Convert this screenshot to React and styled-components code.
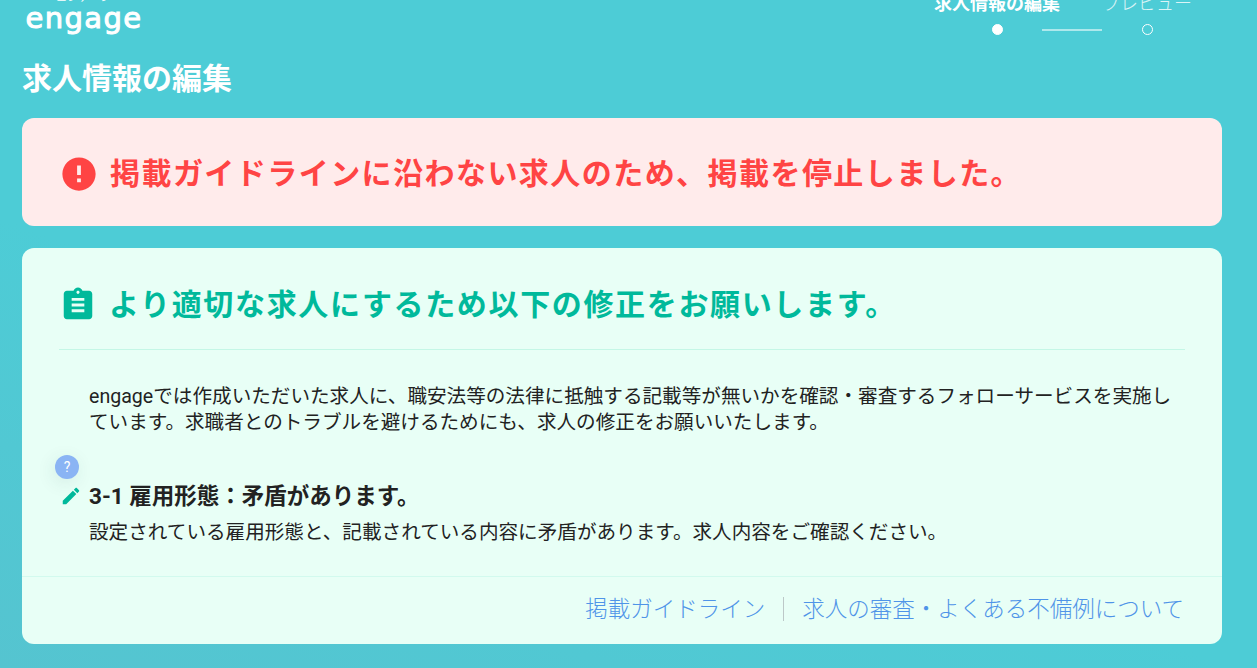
import styled, { createGlobalStyle } from 'styled-components'

const GlobalStyle = createGlobalStyle`
    html, body {
        margin: 0;
        height: 100%;
        overflow: hidden;
    }
    body {
        font-family: Roboto, "Noto Sans CJK JP", sans-serif;
        color: #222;
    }
`

const Page = styled.div`
    height: 668px;
    overflow: hidden;
    padding: 0 35px 0 22px;
    background: linear-gradient(20deg, #55c4d0 0%, #4dccd6 40%, #4dccd6 100%);
`
const Header = styled.header`
    height: 60px;
    display: flex;
    justify-content: space-between;
    align-items: flex-start;
    padding: 0 0 0 4px;
`
const Logo = styled.div`
    margin-top: -7px;
    display: flex;
    flex-direction: column;
    align-items: center;
    color: #fff;
    width: 116px;
`
const LogoKana = styled.span`
    font-size: 10px;
    line-height: 10px;
    letter-spacing: 1px;
`
const LogoName = styled.span`
    font-family: "DejaVu Sans", sans-serif;
    font-size: 29px;
    line-height: 30px;
    letter-spacing: 1.4px;
    -webkit-text-stroke: 1px #fff;
`
const Steps = styled.div`
    display: grid;
    grid-template-columns: 60px 60px 60px;
    column-gap: 15px;
    margin: -8px 45px 0 0;
    justify-items: center;
    align-items: center;
    row-gap: 8px;
`
const StepLabel = styled.span`
    white-space: nowrap;
    font-size: 18px;
    line-height: 24px;
    color: #fff;
    font-weight: ${props => (props.$active ? 700 : 300)};
    opacity: ${props => (props.$active ? 1 : 0.8)};
    grid-column: ${props => props.$column};
`
const StepDot = styled.span`
    width: 11px;
    height: 11px;
    box-sizing: border-box;
    border-radius: 50%;
    border: 1.5px solid #fff;
    background: ${props => (props.$active ? '#fff' : 'transparent')};
`
const StepLine = styled.span`
    width: 60px;
    height: 2px;
    background: rgba(255, 255, 255, 0.55);
`
const PageTitle = styled.h1`
    margin: 0 0 20px;
    height: 38px;
    font-size: 30px;
    line-height: 38px;
    font-weight: 700;
    color: #fff;
`
const Banner = styled.section`
    height: 108px;
    box-sizing: border-box;
    padding: 3px 38px 0;
    display: flex;
    align-items: center;
    gap: 12px;
    border-radius: 12px;
    background: #ffebeb;
    margin-bottom: 22px;
`
const Heading = styled.h2`
    margin: 0;
    font-size: 30px;
    line-height: 40px;
    font-weight: 700;
    letter-spacing: ${props => props.$spacing}px;
    color: ${props => props.$color};
    white-space: nowrap;
`
const Card = styled.section`
    position: relative;
    height: 396px;
    box-sizing: border-box;
    border-radius: 12px;
    background: #e8fff6;
    display: flex;
    flex-direction: column;
`
const CardHead = styled.div`
    margin: 0 37px;
    height: 102px;
    box-sizing: border-box;
    padding: 13px 0 0 0;
    display: flex;
    align-items: center;
    gap: 12px;
    border-bottom: 1px solid #c4f7e6;
`
const Body = styled.div`
    flex: 1;
    padding: 34px 46px 0 67px;
`
const Lead = styled.p`
    margin: 0 0 46px;
    font-size: 19.6px;
    line-height: 26px;
    color: #222;
`
const ItemTitle = styled.h3`
    position: relative;
    margin: 0 0 10px;
    font-size: 22.5px;
    line-height: 28px;
    font-weight: 700;
    color: #222;
`
const EditIcon = styled.svg`
    position: absolute;
    left: -29px;
    top: 3px;
    width: 22px;
    height: 22px;
    fill: #00b99b;
`
const ItemText = styled.p`
    margin: 0;
    font-size: 19.6px;
    line-height: 26px;
    color: #222;
`
const Help = styled.span`
    position: absolute;
    left: 33px;
    top: 207px;
    width: 24px;
    height: 24px;
    border-radius: 50%;
    background: #8ab4f4;
    color: #fff;
    font-size: 14px;
    line-height: 24px;
    text-align: center;
    box-shadow: -2px 4px 18px rgba(40, 70, 80, 0.1);
`
const Footer = styled.footer`
    height: 68px;
    box-sizing: border-box;
    padding: 0 38px 4px 0;
    border-top: 1px solid #d2faee;
    display: flex;
    justify-content: flex-end;
    align-items: center;
`
const FooterLink = styled.a`
    font-size: 22.5px;
    line-height: 30px;
    font-weight: 300;
    color: #4f94e8;
    & + & {
        margin-left: 18px;
        padding-left: 18px;
        border-left: 1px solid #bcc8c8;
        line-height: 24px;
    }
`
const HeadIcon = styled.svg`
    flex: none;
    width: 38px;
    height: 38px;
    fill: ${props => props.$color};
`

function App() {
    return (
        <Page>
            <GlobalStyle />
            <Header>
                <Logo>
                    <LogoKana>エンゲージ</LogoKana>
                    <LogoName>engage</LogoName>
                </Logo>
                <Steps>
                    <StepLabel $active $column={1}>求人情報の編集</StepLabel>
                    <StepLabel $column={3}>プレビュー</StepLabel>
                    <StepDot $active />
                    <StepLine />
                    <StepDot />
                </Steps>
            </Header>
            <PageTitle>求人情報の編集</PageTitle>
            <Banner>
                <HeadIcon viewBox="0 0 24 24" $color="#ff4444" aria-hidden="true">
                    <path d="M12 1.5C6.2 1.5 1.5 6.2 1.5 12S6.2 22.5 12 22.5 22.5 17.8 22.5 12 17.8 1.5 12 1.5zm1.2 15.7h-2.4v-2.4h2.4v2.4zm0-4.6h-2.4V6.6h2.4v6z" />
                </HeadIcon>
                <Heading $color="#ff4444" $spacing={1.45}>掲載ガイドラインに沿わない求人のため、掲載を停止しました。</Heading>
            </Banner>
            <Card>
                <CardHead>
                    <HeadIcon viewBox="0 0 24 24" $color="#00b99b" aria-hidden="true">
                        <path
                            fillRule="evenodd"
                            d="M19 3h-4.18C14.4 1.84 13.3 1 12 1c-1.3 0-2.4.84-2.82 2H5c-1.1 0-2 .9-2 2v14c0 1.1.9 2 2 2h14c1.1 0 2-.9 2-2V5c0-1.1-.9-2-2-2zm-7 0c.55 0 1 .45 1 1s-.45 1-1 1-1-.45-1-1 .45-1 1-1zM8 7.5v1.800h8V7.500zM8 11.100v1.800h8v-1.800zM8 14.700v1.800h8v-1.800z"
                        />
                    </HeadIcon>
                    <Heading $color="#00b99b" $spacing={1.65}>より適切な求人にするため以下の修正をお願いします。</Heading>
                </CardHead>
                <Body>
                    <Lead>
                        engageでは作成いただいた求人に、職安法等の法律に抵触する記載等が無いかを確認・審査するフォローサービスを実施しています。求職者とのトラブルを避けるためにも、求人の修正をお願いいたします。
                    </Lead>
                    <ItemTitle>
                        <EditIcon viewBox="0 0 24 24" aria-hidden="true">
                            <path d="M3 17.25V21h3.75L17.81 9.940l-3.750-3.750L3 17.250zM20.710 7.040c.39-.39.39-1.020 0-1.410l-2.340-2.340c-.39-.39-1.020-.39-1.410 0l-1.830 1.830 3.750 3.750 1.830-1.830z" />
                        </EditIcon>
                        3-1 雇用形態：矛盾があります。
                    </ItemTitle>
                    <ItemText>設定されている雇用形態と、記載されている内容に矛盾があります。求人内容をご確認ください。</ItemText>
                </Body>
                <Help>?</Help>
                <Footer>
                    <FooterLink>掲載ガイドライン</FooterLink>
                    <FooterLink>求人の審査・よくある不備例について</FooterLink>
                </Footer>
            </Card>
        </Page>
    )
}

export default App
